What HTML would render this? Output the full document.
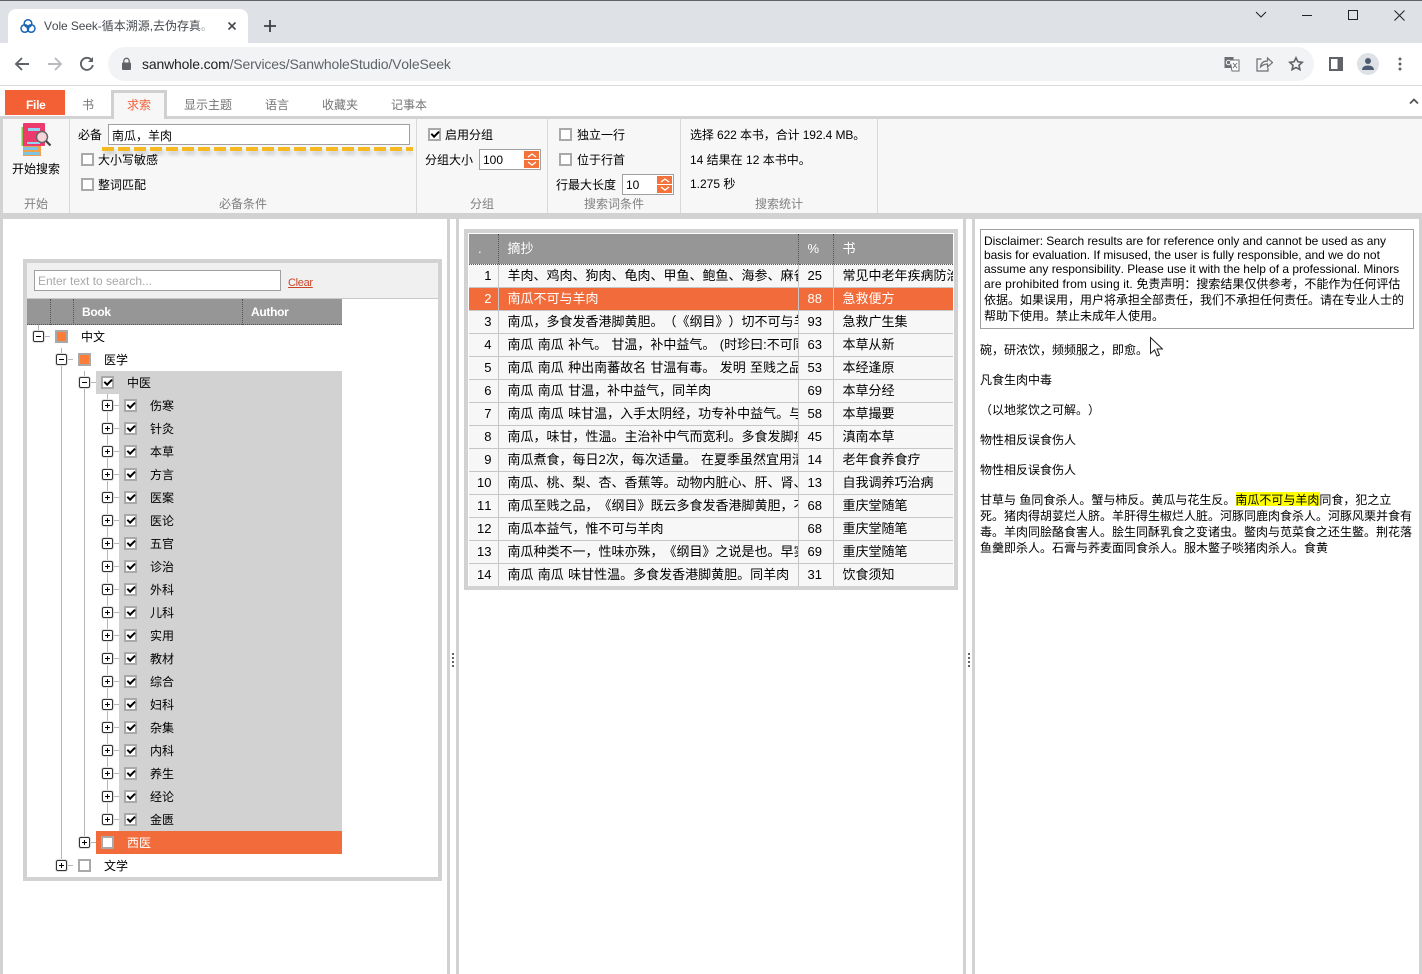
<!DOCTYPE html>
<html lang="zh-CN"><head><meta charset="utf-8"><title>Vole Seek</title>
<style>
html,body{margin:0;padding:0;width:1422px;height:974px;overflow:hidden;background:#fff}
body{position:relative;font:12px/16px "Liberation Sans","Noto Sans CJK SC",sans-serif;color:#000;text-spacing-trim:space-all;font-kerning:none}
.a,.t,svg.a{position:absolute}
.t{white-space:nowrap;height:16px;line-height:16px}
.g{color:#808080}.m{color:#757575}
.c{position:absolute;box-sizing:border-box;width:13px;height:13px;border:2px solid #a9a9a9;background:#fff}
.c.k::after{content:"";position:absolute;left:1px;top:1px;width:6px;height:2.500px;border-left:2px solid #000;border-bottom:2px solid #000;transform:rotate(-45deg)}
.c.o::after{content:"";position:absolute;left:0;top:0;width:9px;height:9px;background:#fb7d37}
.e{position:absolute;box-sizing:border-box;width:11px;height:11px;border:1px solid #333;border-radius:2px;background:#fff;box-shadow:0 0 0 1px #ddd}
.e::before{content:"";position:absolute;left:2px;top:4px;width:5px;height:1px;background:#000}
.e.p::after{content:"";position:absolute;left:4px;top:2px;width:1px;height:5px;background:#000}
table{position:absolute;left:469px;top:234px;width:484px;border-collapse:collapse;table-layout:fixed;font-size:13px;background:#f7f7f7;word-spacing:.7px}
th{height:30px;padding:0 0 0 9px;background:#969696;color:#fff;font-weight:400;text-align:left;border-right:1px dotted #555;border-bottom:1px dotted #555;box-sizing:border-box}
td{height:23px;padding:0 0 0 9px;box-sizing:border-box;border-right:1px solid #c6c6c6;border-bottom:1px solid #c6c6c6;white-space:nowrap;overflow:hidden;line-height:16px}
td:first-child{text-align:right;padding:0 6px 0 0}
td:last-child,th:last-child{border-right:0}
tr:last-child td{border-bottom:0}
tr.s td{background:#f26b3a;color:#fff}
.spin{position:absolute;width:15px;height:17px;background:#f4733a}
.spin::before{content:"";position:absolute;left:0;right:0;top:8px;height:1px;background:#fff}
</style></head><body>

<!-- browser chrome -->
<div class="a" style="left:0;top:0;width:1422px;height:43px;background:#dee1e6;border-top:1px solid #5f6368;box-sizing:border-box"></div>
<div class="a" style="left:8px;top:9px;width:240px;height:34px;background:#fff;border-radius:8px 8px 0 0"></div>
<svg class="a" style="left:20px;top:18px" width="16" height="16" viewBox="0 0 16 16" fill="none" stroke="#1a63b5" stroke-width="1.500"><circle cx="8" cy="5.500" r="3.800"/><circle cx="4.800" cy="10.500" r="3.800"/><circle cx="11.200" cy="10.500" r="3.800"/></svg>
<div class="t" style="left:44px;top:18px;width:164px;overflow:hidden;color:#45494e"><span style="letter-spacing:-.1px">Vole Seek-</span>循本溯源,去伪存真。</div>
<div class="a" style="left:196px;top:16px;width:14px;height:20px;background:linear-gradient(90deg,rgba(255,255,255,0),#fff)"></div>
<svg class="a" style="left:227px;top:21px" width="10" height="10" fill="none" stroke="#45494e" stroke-width="1.600"><path d="M1.500 1.500l7 7M8.500 1.500l-7 7"/></svg>
<svg class="a" style="left:263px;top:19px" width="14" height="14" fill="none" stroke="#3c4043" stroke-width="1.800"><path d="M7 1v12M1 7h12"/></svg>
<svg class="a" style="left:1255px;top:10px" width="160" height="12" fill="none" stroke="#222" stroke-width="1"><path d="M1 2l5 5 5-5"/><path d="M47 5.500h10"/><rect x="93.500" y=".5" width="9" height="9"/><path d="M139.500 .5l10 10M149.500 .5l-10 10"/></svg>
<div class="a" style="left:0;top:43px;width:1422px;height:42px;background:#fff;border-bottom:1px solid #dadada"></div>
<div class="a" style="left:108px;top:47px;width:1206px;height:34px;background:#f1f3f4;border-radius:17px"></div>
<svg class="a" style="left:13px;top:55px" width="84" height="18" fill="none" stroke-width="1.900"><path d="M16 9H3M9 3L3 9l6 6" stroke="#5f6368"/><path d="M35 9h13M42 3l6 6-6 6" stroke="#b8babd"/><path d="M78.500 5A6 6 0 1 0 79.800 10" stroke="#5f6368"/><path d="M80 2v5h-5z" fill="#5f6368" stroke="none"/></svg>
<svg class="a" style="left:121px;top:57px" width="11" height="14"><path d="M2.800 5.500V4a2.700 2.700 0 0 1 5.400 0v1.500" fill="none" stroke="#5f6368" stroke-width="1.300"/><rect x="1" y="5.500" width="9" height="7.500" rx="1" fill="#5f6368"/></svg>
<div class="t" style="left:142px;top:56px;font-size:14px;letter-spacing:-.16px;color:#5f6368"><span style="color:#202124">sanwhole.com</span>/Services/SanwholeStudio/VoleSeek</div>
<svg class="a" style="left:1224px;top:56px" width="16" height="16"><rect x="0.500" y="1" width="9" height="11" fill="#6b6e72"/><path d="M6 4h9v11H8z" fill="#fff" stroke="#6b6e72"/><circle cx="4.500" cy="6.500" r="2.200" fill="none" stroke="#fff"/><path d="M9 7l4 5M13 7l-4 5" stroke="#6b6e72"/></svg>
<svg class="a" style="left:1256px;top:56px" width="17" height="16" fill="none" stroke="#6b6e72" stroke-width="1.200"><path d="M5.500 3H1v12h11v-3"/><path d="M4.500 11c.5-4 3-6 7-6V2l5 4.500-5 4.500V8c-3 0-5 1-7 3z"/></svg>
<svg class="a" style="left:1288px;top:56px" width="16" height="16" fill="none" stroke="#5f6368" stroke-width="1.600"><path d="M8 1.800l1.900 4 4.300.5-3.200 3 .9 4.300L8 11.500l-3.900 2.100.9-4.300-3.200-3 4.300-.5z"/></svg>
<svg class="a" style="left:1329px;top:57px" width="14" height="14"><rect width="14" height="14" fill="#5f6368"/><rect x="2" y="2" width="6.500" height="10" fill="#fff"/></svg>
<div class="a" style="left:1357px;top:53px;width:22px;height:22px;border-radius:50%;background:#dee1e6"></div>
<svg class="a" style="left:1361px;top:57px" width="14" height="14" fill="#4d5a73"><circle cx="7" cy="4" r="3"/><path d="M1 13c0-3 2.500-4.500 6-4.500s6 1.500 6 4.500z"/></svg>
<svg class="a" style="left:1398px;top:57px" width="4" height="14" fill="#5f6368"><circle cx="2" cy="2" r="1.500"/><circle cx="2" cy="7" r="1.500"/><circle cx="2" cy="12" r="1.500"/></svg>

<!-- ribbon tabs -->
<div class="a" style="left:5px;top:90px;width:60px;height:25px;background:#f46036"></div>
<div class="t" style="left:26px;top:97px;color:#fff;font-weight:700;letter-spacing:-.3px">File</div>
<div class="t m" style="left:82px;top:97px">书</div>
<div class="t m" style="left:184px;top:97px">显示主题</div>
<div class="t m" style="left:265px;top:97px">语言</div>
<div class="t m" style="left:322px;top:97px">收藏夹</div>
<div class="t m" style="left:391px;top:97px">记事本</div>
<svg class="a" style="left:1409px;top:97px" width="10" height="8" fill="none" stroke="#555" stroke-width="1.800"><path d="M1 6.500l4-4 4 4"/></svg>

<!-- ribbon -->
<div class="a" style="left:0;top:116px;width:1422px;height:97px;background:#f7f7f7;border-top:3px solid #d2d2d2;box-sizing:border-box"></div>
<div class="a" style="left:0;top:213px;width:1422px;height:6px;background:#d2d2d2"></div>
<div class="a" style="left:0;top:116px;width:3px;height:97px;background:#d2d2d2"></div>
<div class="a" style="left:111px;top:90px;width:56px;height:29px;box-sizing:border-box;background:#f7f7f7;border:3px solid #d0d0d0;border-bottom:0"></div>
<div class="t" style="left:127px;top:97px;color:#f4623a">求索</div>
<div class="a" style="left:69px;top:118px;width:1px;height:95px;background:#d8d8d8"></div>
<div class="a" style="left:416px;top:118px;width:1px;height:95px;background:#d8d8d8"></div>
<div class="a" style="left:547px;top:118px;width:1px;height:95px;background:#d8d8d8"></div>
<div class="a" style="left:680px;top:118px;width:1px;height:95px;background:#d8d8d8"></div>
<div class="a" style="left:877px;top:118px;width:1px;height:95px;background:#d8d8d8"></div>

<svg class="a" style="left:20px;top:122px" width="32" height="36">
<rect x="1.500" y="5" width="4" height="19" fill="#8cc84b"/>
<rect x="3" y="24" width="18" height="10" fill="#f0a050"/>
<rect x="4" y="25" width="14" height="3" fill="#7cc4e0"/><rect x="4" y="30" width="15" height="3" fill="#7cc4e0"/>
<rect x="3" y="1" width="22" height="23" rx="1" fill="#ec3a6c"/>
<rect x="8" y="6" width="12" height="3" fill="#8fd4f0"/>
<rect x="7" y="20" width="13" height="2" fill="#8fd4f0"/>
<circle cx="22" cy="15" r="5.500" fill="#f6d4d8" stroke="#666" stroke-width="1.500"/>
<path d="M26 19l4.500 4.500" stroke="#444" stroke-width="2.200"/>
</svg>
<div class="t" style="left:12px;top:161px">开始搜索</div>
<div class="t g" style="left:24px;top:196px">开始</div>

<div class="t" style="left:78px;top:127px">必备</div>
<div class="a" style="left:108px;top:124px;width:302px;height:21px;box-sizing:border-box;background:#fff;border:1px solid #a0a0a0"></div>
<div class="t" style="left:112px;top:128px">南瓜，羊肉</div>
<div class="a" style="left:104px;top:151px;width:308px;height:3px;background:repeating-linear-gradient(90deg,#888 0 12px,transparent 12px 16px);filter:blur(2px);opacity:.55"></div>
<div class="a" style="left:102px;top:147px;width:311px;height:4px;background:repeating-linear-gradient(90deg,#f5b921 0 12px,transparent 12px 16px)"></div>
<div class="c" style="left:81px;top:153px"></div><div class="t" style="left:98px;top:152px">大小写敏感</div>
<div class="c" style="left:81px;top:178px"></div><div class="t" style="left:98px;top:177px">整词匹配</div>
<div class="t g" style="left:219px;top:196px">必备条件</div>

<div class="c k" style="left:428px;top:128px"></div><div class="t" style="left:445px;top:127px">启用分组</div>
<div class="t" style="left:425px;top:152px">分组大小</div>
<div class="a" style="left:479px;top:149px;width:62px;height:21px;box-sizing:border-box;background:#fff;border:1px solid #a0a0a0"></div>
<div class="t" style="left:483px;top:152px">100</div>
<div class="spin" style="left:524px;top:151px"></div>
<svg class="a" style="left:527px;top:152px" width="10" height="15" fill="none" stroke="#fff" stroke-width="1.300"><path d="M1 5l4-3 4 3M1 10l4 3 4-3"/></svg>
<div class="t g" style="left:470px;top:196px">分组</div>

<div class="c" style="left:559px;top:128px"></div><div class="t" style="left:577px;top:127px">独立一行</div>
<div class="c" style="left:559px;top:153px"></div><div class="t" style="left:577px;top:152px">位于行首</div>
<div class="t" style="left:556px;top:177px">行最大长度</div>
<div class="a" style="left:622px;top:174px;width:52px;height:21px;box-sizing:border-box;background:#fff;border:1px solid #a0a0a0"></div>
<div class="t" style="left:626px;top:177px">10</div>
<div class="spin" style="left:657px;top:176px"></div>
<svg class="a" style="left:660px;top:177px" width="10" height="15" fill="none" stroke="#fff" stroke-width="1.300"><path d="M1 5l4-3 4 3M1 10l4 3 4-3"/></svg>
<div class="t g" style="left:584px;top:196px">搜索词条件</div>

<div class="t" style="left:690px;top:127px;letter-spacing:-.1px">选择 622 本书，合计 192.4 MB。</div>
<div class="t" style="left:690px;top:152px">14 结果在 12 本书中。</div>
<div class="t" style="left:690px;top:176px">1.275 秒</div>
<div class="t g" style="left:755px;top:196px">搜索统计</div>

<!-- panel borders -->
<div class="a" style="left:0;top:219px;width:3px;height:755px;background:#d2d2d2"></div>
<div class="a" style="left:447px;top:219px;width:3px;height:755px;background:#d2d2d2"></div>
<div class="a" style="left:456px;top:219px;width:3px;height:755px;background:#d2d2d2"></div>
<div class="a" style="left:963px;top:219px;width:3px;height:755px;background:#d2d2d2"></div>
<div class="a" style="left:972px;top:219px;width:3px;height:755px;background:#d2d2d2"></div>
<div class="a" style="left:1419px;top:219px;width:3px;height:755px;background:#d2d2d2"></div>
<svg class="a" style="left:452px;top:653px" width="2" height="14" fill="#666"><rect y="0" width="2" height="2"/><rect y="4" width="2" height="2"/><rect y="8" width="2" height="2"/><rect y="12" width="2" height="2"/></svg>
<svg class="a" style="left:968px;top:653px" width="2" height="14" fill="#666"><rect y="0" width="2" height="2"/><rect y="4" width="2" height="2"/><rect y="8" width="2" height="2"/><rect y="12" width="2" height="2"/></svg>

<!-- tree box -->
<div class="a" style="left:23px;top:259px;width:419px;height:622px;box-sizing:border-box;border:4px solid #d2d2d2;background:#fff"></div>
<div class="a" style="left:27px;top:263px;width:411px;height:35px;background:#f0f0f0;border-bottom:1px solid #c8c8c8"></div>
<div class="a" style="left:34px;top:270px;width:247px;height:21px;box-sizing:border-box;background:#fff;border:1px solid #a0a0a0"></div>
<div class="t" style="left:38px;top:273px;color:#a8a8a8">Enter text to search...</div>
<div class="t" style="left:288px;top:275px;color:#c8452a;text-decoration:underline;font-size:11px;letter-spacing:-.3px">Clear</div>
<div class="a" style="left:27px;top:299px;width:315px;height:26px;background:#969696;border-bottom:1px dotted #555;box-sizing:border-box"></div>
<div class="a" style="left:50px;top:299px;height:26px;border-left:1px dotted #555"></div>
<div class="a" style="left:73px;top:299px;height:26px;border-left:1px dotted #555"></div>
<div class="a" style="left:242px;top:299px;height:26px;border-left:1px dotted #555"></div>
<div class="t" style="left:82px;top:304px;color:#fff;font-weight:700;font-size:12px;letter-spacing:-.3px">Book</div>
<div class="t" style="left:251px;top:304px;color:#fff;font-weight:700;font-size:12px;letter-spacing:-.3px">Author</div>

<div class="a" style="left:96px;top:371px;width:246px;height:23px;background:#d2d2d2"></div>
<div class="a" style="left:119px;top:394px;width:223px;height:437px;background:#d2d2d2"></div>
<div class="a" style="left:96px;top:831px;width:246px;height:23px;background:#f26b3a"></div>

<svg class="a" style="left:0;top:0;pointer-events:none" width="200" height="900" stroke="#b5b5b5" fill="none">
<path d="M38.500 325v6M44 336.500h6M61.500 348v518M67 359.500h6M84.500 371v471M90 382.500h6M107.500 394v425"/>
<path d="M113 405.500h6M113 428.500h6M113 451.500h6M113 474.500h6M113 497.500h6M113 520.500h6M113 543.500h6M113 566.500h6M113 589.500h6M113 612.500h6M113 635.500h6M113 658.500h6M113 681.500h6M113 704.500h6M113 727.500h6M113 750.500h6M113 773.500h6M113 796.500h6M113 819.500h6M90 842.500h6M67 865.500h6"/>
</svg>

<div class="e" style="left:33px;top:331px"></div><div class="c o" style="left:55px;top:330px"></div><div class="t" style="left:81px;top:329px">中文</div>
<div class="e" style="left:56px;top:354px"></div><div class="c o" style="left:78px;top:353px"></div><div class="t" style="left:104px;top:352px">医学</div>
<div class="e" style="left:79px;top:377px"></div><div class="c k" style="left:101px;top:376px"></div><div class="t" style="left:127px;top:375px">中医</div>

<div class="e p" style="left:102px;top:400px"></div><div class="c k" style="left:124px;top:399px"></div><div class="t" style="left:150px;top:398px">伤寒</div>
<div class="e p" style="left:102px;top:423px"></div><div class="c k" style="left:124px;top:422px"></div><div class="t" style="left:150px;top:421px">针灸</div>
<div class="e p" style="left:102px;top:446px"></div><div class="c k" style="left:124px;top:445px"></div><div class="t" style="left:150px;top:444px">本草</div>
<div class="e p" style="left:102px;top:469px"></div><div class="c k" style="left:124px;top:468px"></div><div class="t" style="left:150px;top:467px">方言</div>
<div class="e p" style="left:102px;top:492px"></div><div class="c k" style="left:124px;top:491px"></div><div class="t" style="left:150px;top:490px">医案</div>
<div class="e p" style="left:102px;top:515px"></div><div class="c k" style="left:124px;top:514px"></div><div class="t" style="left:150px;top:513px">医论</div>
<div class="e p" style="left:102px;top:538px"></div><div class="c k" style="left:124px;top:537px"></div><div class="t" style="left:150px;top:536px">五官</div>
<div class="e p" style="left:102px;top:561px"></div><div class="c k" style="left:124px;top:560px"></div><div class="t" style="left:150px;top:559px">诊治</div>
<div class="e p" style="left:102px;top:584px"></div><div class="c k" style="left:124px;top:583px"></div><div class="t" style="left:150px;top:582px">外科</div>
<div class="e p" style="left:102px;top:607px"></div><div class="c k" style="left:124px;top:606px"></div><div class="t" style="left:150px;top:605px">儿科</div>
<div class="e p" style="left:102px;top:630px"></div><div class="c k" style="left:124px;top:629px"></div><div class="t" style="left:150px;top:628px">实用</div>
<div class="e p" style="left:102px;top:653px"></div><div class="c k" style="left:124px;top:652px"></div><div class="t" style="left:150px;top:651px">教材</div>
<div class="e p" style="left:102px;top:676px"></div><div class="c k" style="left:124px;top:675px"></div><div class="t" style="left:150px;top:674px">综合</div>
<div class="e p" style="left:102px;top:699px"></div><div class="c k" style="left:124px;top:698px"></div><div class="t" style="left:150px;top:697px">妇科</div>
<div class="e p" style="left:102px;top:722px"></div><div class="c k" style="left:124px;top:721px"></div><div class="t" style="left:150px;top:720px">杂集</div>
<div class="e p" style="left:102px;top:745px"></div><div class="c k" style="left:124px;top:744px"></div><div class="t" style="left:150px;top:743px">内科</div>
<div class="e p" style="left:102px;top:768px"></div><div class="c k" style="left:124px;top:767px"></div><div class="t" style="left:150px;top:766px">养生</div>
<div class="e p" style="left:102px;top:791px"></div><div class="c k" style="left:124px;top:790px"></div><div class="t" style="left:150px;top:789px">经论</div>
<div class="e p" style="left:102px;top:814px"></div><div class="c k" style="left:124px;top:813px"></div><div class="t" style="left:150px;top:812px">金匮</div>
<div class="e p" style="left:79px;top:837px"></div><div class="c" style="left:101px;top:836px"></div><div class="t" style="left:127px;top:835px;color:#fff">西医</div>
<div class="e p" style="left:56px;top:860px"></div><div class="c" style="left:78px;top:859px"></div><div class="t" style="left:104px;top:858px">文学</div>

<!-- results table -->
<div class="a" style="left:464px;top:229px;width:494px;height:361px;box-sizing:border-box;border:4px solid #d2d2d2;background:#fff"></div>
<table>
<colgroup><col style="width:29px"><col style="width:300px"><col style="width:35px"><col style="width:120px"></colgroup>
<tr><th>.</th><th>摘抄</th><th>%</th><th>书</th></tr>
<tr><td>1</td><td>羊肉、鸡肉、狗肉、龟肉、甲鱼、鲍鱼、海参、麻雀</td><td>25</td><td>常见中老年疾病防治</td></tr>
<tr class="s"><td>2</td><td>南瓜不可与羊肉</td><td>88</td><td>急救便方</td></tr>
<tr><td>3</td><td>南瓜，多食发香港脚黄胆。（《纲目》）切不可与羊肉</td><td>93</td><td>急救广生集</td></tr>
<tr><td>4</td><td>南瓜 南瓜 补气。 甘温，补中益气。 (时珍曰:不可同</td><td>63</td><td>本草从新</td></tr>
<tr><td>5</td><td>南瓜 南瓜 种出南蕃故名 甘温有毒。 发明 至贱之品，</td><td>53</td><td>本经逢原</td></tr>
<tr><td>6</td><td>南瓜 南瓜 甘温，补中益气，同羊肉</td><td>69</td><td>本草分经</td></tr>
<tr><td>7</td><td>南瓜 南瓜 味甘温，入手太阴经，功专补中益气。与羊肉</td><td>58</td><td>本草撮要</td></tr>
<tr><td>8</td><td>南瓜，味甘，性温。主治补中气而宽利。多食发脚疾</td><td>45</td><td>滇南本草</td></tr>
<tr><td>9</td><td>南瓜煮食，每日2次，每次适量。 在夏季虽然宜用清</td><td>14</td><td>老年食养食疗</td></tr>
<tr><td>10</td><td>南瓜、桃、梨、杏、香蕉等。动物内脏心、肝、肾、</td><td>13</td><td>自我调养巧治病</td></tr>
<tr><td>11</td><td>南瓜至贱之品，《纲目》既云多食发香港脚黄胆，不</td><td>68</td><td>重庆堂随笔</td></tr>
<tr><td>12</td><td>南瓜本益气，惟不可与羊肉</td><td>68</td><td>重庆堂随笔</td></tr>
<tr><td>13</td><td>南瓜种类不一，性味亦殊，《纲目》之说是也。早实</td><td>69</td><td>重庆堂随笔</td></tr>
<tr><td>14</td><td>南瓜 南瓜 味甘性温。多食发香港脚黄胆。同羊肉</td><td>31</td><td>饮食须知</td></tr>
</table>

<!-- reading pane -->
<div class="a" style="left:980px;top:229px;width:434px;height:100px;box-sizing:border-box;border:1px solid #a0a0a0;background:#fff"></div>
<div class="t" style="left:984px;top:233px;letter-spacing:-.03px">Disclaimer: Search results are for reference only and cannot be used as any</div>
<div class="t" style="left:984px;top:247px;letter-spacing:-.03px">basis for evaluation. If misused, the user is fully responsible, and we do not</div>
<div class="t" style="left:984px;top:261px;letter-spacing:-.03px">assume any responsibility. Please use it with the help of a professional. Minors</div>
<div class="t" style="left:984px;top:276px"><span style="letter-spacing:.12px">are prohibited from using it. </span>免责声明：搜索结果仅供参考，不能作为任何评估</div>
<div class="t" style="left:984px;top:292px">依据。如果误用，用户将承担全部责任，我们不承担任何责任。请在专业人士的</div>
<div class="t" style="left:984px;top:308px">帮助下使用。禁止未成年人使用。</div>

<div class="t" style="left:980px;top:342px">碗，研浓饮，频频服之，即愈。</div>
<div class="t" style="left:980px;top:372px">凡食生肉中毒</div>
<div class="t" style="left:980px;top:402px">（以地浆饮之可解。）</div>
<div class="t" style="left:980px;top:432px">物性相反误食伤人</div>
<div class="t" style="left:980px;top:462px">物性相反误食伤人</div>
<div class="a" style="left:1236px;top:492px;width:84px;height:14px;background:#ff0"></div>
<div class="t" style="left:980px;top:492px">甘草与 鱼同食杀人。蟹与柿反。黄瓜与花生反。南瓜不可与羊肉同食，犯之立</div>
<div class="t" style="left:980px;top:508px">死。猪肉得胡荽烂人脐。羊肝得生椒烂人脏。河豚同鹿肉食杀人。河豚风栗并食有</div>
<div class="t" style="left:980px;top:524px">毒。羊肉同脍酪食害人。脍生同酥乳食之变诸虫。鳖肉与苋菜食之还生鳖。荆花落</div>
<div class="t" style="left:980px;top:540px">鱼羹即杀人。石膏与荞麦面同食杀人。服木鳖子啖猪肉杀人。食黄</div>

<svg class="a" style="left:1149px;top:336px" width="14" height="22"><path d="M1.500 1.500v16l4-3.500 2.500 6 2.500-1-2.500-6h5.500z" fill="#fff" stroke="#222" stroke-width="1"/></svg>

</body></html>
